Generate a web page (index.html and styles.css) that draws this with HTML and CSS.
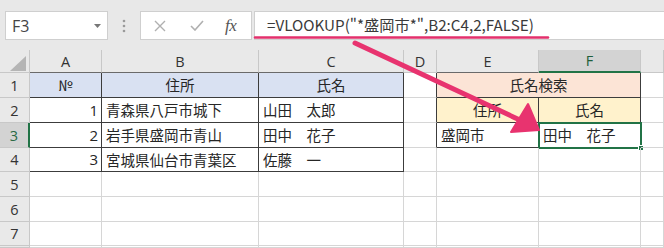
FILE: index.html
```html
<!DOCTYPE html>
<html lang="ja">
<head>
<meta charset="utf-8">
<link rel="stylesheet" href="styles.css">
</head>
<body>
<div class="app">
  <div class="fbar">
    <div class="namebox"><span>F3</span><svg class="caret" width="7" height="4" viewBox="0 0 7 4"><path d="M0 0H7L3.5 4Z" fill="#777"/></svg></div>
    <div class="sep"><svg width="4" height="14" viewBox="0 0 4 14"><circle cx="2" cy="2" r="1.3" fill="#9a9a9a"/><circle cx="2" cy="7" r="1.3" fill="#9a9a9a"/><circle cx="2" cy="12" r="1.3" fill="#9a9a9a"/></svg></div>
    <div class="btns">
      <svg class="ico" width="12" height="12" viewBox="0 0 12 12"><path d="M1 1L11 11M11 1L1 11" stroke="#b0b0b0" stroke-width="1.4" fill="none"/></svg>
      <svg class="ico" width="14" height="11" viewBox="0 0 14 11"><path d="M1 6L5 10L13 1" stroke="#b0b0b0" stroke-width="1.6" fill="none"/></svg>
      <span class="fx">fx</span>
    </div>
    <div class="formula"><span>=VLOOKUP("*盛岡市*",B2:C4,2,FALSE)</span></div>
  </div>
  <div class="sheet">
    <div class="hd corner"><span class="tri"></span></div>
    <div class="hd col tb">A</div>
    <div class="hd col tb">B</div>
    <div class="hd col tb">C</div>
    <div class="hd col">D</div>
    <div class="hd col tb">E</div>
    <div class="hd col sel-col">F</div>
    <div class="hd col"></div>

    <div class="hd row">1</div>
    <div class="c dk blue ctr">№</div>
    <div class="c dk blue ctr">住所</div>
    <div class="c dk blue ctr">氏名</div>
    <div class="c dkr"></div>
    <div class="c dk peach ctr span2">氏名検索</div>
    <div class="c"></div>

    <div class="hd row">2</div>
    <div class="c dk num">1</div>
    <div class="c dk">青森県八戸市城下</div>
    <div class="c dk">山田　太郎</div>
    <div class="c dkr"></div>
    <div class="c dk yellow ctr">住所</div>
    <div class="c dk yellow ctr">氏名</div>
    <div class="c"></div>

    <div class="hd row sel-row">3</div>
    <div class="c dk num">2</div>
    <div class="c dk">岩手県盛岡市青山</div>
    <div class="c dk">田中　花子</div>
    <div class="c dkr"></div>
    <div class="c dk">盛岡市</div>
    <div class="c dk active">田中　花子<span class="handle"></span></div>
    <div class="c"></div>

    <div class="hd row">4</div>
    <div class="c dk num">3</div>
    <div class="c dk">宮城県仙台市青葉区</div>
    <div class="c dk">佐藤　一</div>
    <div class="c"></div>
    <div class="c"></div>
    <div class="c"></div>
    <div class="c"></div>

    <div class="hd row">5</div>
    <div class="c"></div><div class="c"></div><div class="c"></div><div class="c"></div><div class="c"></div><div class="c"></div><div class="c"></div>
    <div class="hd row">6</div>
    <div class="c"></div><div class="c"></div><div class="c"></div><div class="c"></div><div class="c"></div><div class="c"></div><div class="c"></div>
    <div class="hd row">7</div>
    <div class="c"></div><div class="c"></div><div class="c"></div><div class="c"></div><div class="c"></div><div class="c"></div><div class="c"></div>
    <div class="hd row"></div>
    <div class="c"></div><div class="c"></div><div class="c"></div><div class="c"></div><div class="c"></div><div class="c"></div><div class="c"></div>
  </div>
  <svg class="annot" width="664" height="248" viewBox="0 0 664 248">
    <line x1="255" y1="37.5" x2="548" y2="37.5" stroke="#e3306c" stroke-width="2.5" stroke-linecap="round"/>
    <line x1="355" y1="43" x2="522" y2="121" stroke="#e8336f" stroke-width="5" stroke-linecap="round"/>
    <path d="M539 130L511 132L528 104Z" fill="#e8336f" stroke="#e8336f" stroke-width="2" stroke-linejoin="round"/>
  </svg>
</div>
</body>
</html>
```
FILE: styles.css
```css
* { box-sizing: border-box; }
html, body { margin: 0; padding: 0; }
body {
  width: 664px;
  height: 248px;
  overflow: hidden;
  background: #e8e8e8;
  font-family: "Noto Sans CJK JP", "Noto Sans", sans-serif;
  color: #222;
}
.app { position: relative; width: 664px; height: 248px; }

.fbar {
  height: 50px;
  display: flex;
  padding: 11px 0 10px 5px;
  background: #e8e8e8;
}
.namebox {
  width: 103px;
  background: #fff;
  border: 1px solid #cfcfcf;
  display: flex;
  align-items: center;
  justify-content: space-between;
  padding: 0 6px 0 6px;
  font-family: "Open Sans", "Noto Sans", sans-serif;
  font-size: 16px;
  color: #444;
}
.caret { margin-top: 1px; }
.sep {
  width: 32px;
  display: flex;
  align-items: center;
  justify-content: center;
}
.btns {
  width: 112px;
  background: #fff;
  border: 1px solid #cfcfcf;
  display: flex;
  align-items: center;
  padding: 0 0 0 13px;
}
.btns .ico:first-child { margin-right: 24px; }
.btns .ico:nth-child(2) { margin-right: 21px; }
.fx {
  font-family: "Liberation Serif", serif;
  font-style: italic;
  font-size: 17px;
  color: #555;
  letter-spacing: -0.5px;
}
.formula {
  flex: 1;
  margin-left: 2px;
  background: #fff;
  border: 1px solid #cfcfcf;
  border-right: none;
  display: flex;
  align-items: center;
  padding: 0 0 3px 12px;
  font-size: 15.2px;
  color: #3a3a3a;
  white-space: nowrap;
}

.sheet {
  display: grid;
  grid-template-columns: 30px 72px 157px 145px 33px 102px 102px 23px;
  grid-template-rows: 23px 25px 25px 25px 24px 25px 25px 24px 2px;
  background: #fff;
}
.hd {
  background: #e9e9e9;
  border-right: 1px solid #c8c8c8;
  border-bottom: 1px solid #c8c8c8;
  display: flex;
  align-items: center;
  justify-content: center;
  font-family: "Open Sans", "Noto Sans", sans-serif;
  font-size: 14.5px;
  color: #333;
}
.corner { position: relative; }
.tri {
  position: absolute;
  right: 3px;
  bottom: 1px;
  width: 0;
  height: 0;
  border-left: 16px solid transparent;
  border-bottom: 15px solid #b5b5b5;
}
.col.tb { border-bottom-color: #6a6a6a; }
.sel-col {
  background: #d3d3d3;
  border-bottom: 2px solid #217346;
  color: #1e5e3a;
}
.sel-row {
  background: #d3d3d3;
  border-right: 2px solid #217346;
  color: #2a6a45;
}
.c {
  border-right: 1px solid #d6d6d6;
  border-bottom: 1px solid #d6d6d6;
  display: flex;
  align-items: center;
  padding: 0 0 1px 4px;
  font-size: 14.5px;
  color: #262626;
  white-space: nowrap;
  overflow: visible;
  position: relative;
}
.dk { border-right-color: #3c3c3c; border-bottom-color: #3c3c3c; }
.dkr { border-right-color: #3c3c3c; }
.ctr { justify-content: center; padding-left: 0; }
.num { justify-content: flex-end; padding: 0 3px 1px 0; font-family: "Open Sans", sans-serif; font-size: 15px; }
.span2 { grid-column: span 2; }
.blue { background: #d9e1f2; }
.peach { background: #fce4d6; }
.yellow { background: #fff2cc; }
.active { outline: 2px solid #217346; outline-offset: -1px; }
.handle {
  position: absolute;
  right: -4px;
  bottom: -4px;
  width: 6px;
  height: 6px;
  background: #217346;
  border: 1px solid #fff;
}
.annot {
  position: absolute;
  left: 0;
  top: 0;
  pointer-events: none;
}
```
